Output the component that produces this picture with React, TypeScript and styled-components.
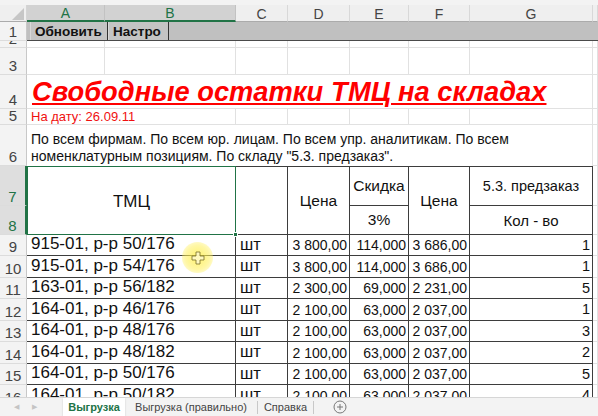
import React from "react";
import styled, { createGlobalStyle, css } from "styled-components";

const GlobalStyle = createGlobalStyle`
  html, body {
    margin: 0;
    padding: 0;
    overflow: hidden;
    background: #ffffff;
  }
  body {
    font-family: "Liberation Sans", Arial, sans-serif;
  }
  * {
    box-sizing: border-box;
  }
`;

const GREEN = "#217346";
const LINE = "#e1e1e1";
const DARK = "#3d3d3d";

// sheet row n lives on grid row n + 2 (row 1 = top strip, row 2 = letters)
const gr = (n: number) => n + 2;
// column letters: A = grid column 2 ... G = 8, the rest = 9
const COL: Record<string, number> = { A: 2, B: 3, C: 4, D: 5, E: 6, F: 7, G: 8, H: 9 };

const Frame = styled.div`
  width: 598px;
  height: 416px;
  display: flex;
  flex-direction: column;
  background: #fff;
`;

const Sheet = styled.div`
  position: relative;
  display: grid;
  grid-template-columns: 27px 78px 131px 52px 62px 59px 61px 123px 1fr;
  grid-template-rows: 5px 17px 19px 7px 27px 34px 16px 41px 40px 29px repeat(8, 21.45px);
  height: 397px;
  overflow: hidden;
  background: #fff;
`;

type Place = { $c: number; $r: number; $cs?: number; $rs?: number };

const place = css<Place>`
  grid-column: ${(p) => p.$c} / span ${(p) => p.$cs ?? 1};
  grid-row: ${(p) => p.$r} / span ${(p) => p.$rs ?? 1};
`;

const Strip = styled.div`
  grid-column: 1 / -1;
  grid-row: 1;
  background: #f3f3f3;
`;

const Corner = styled.div`
  grid-column: 1;
  grid-row: 2;
  background: #efefef;
  border-right: 1px solid #d4d4d4;
  border-bottom: 1px solid #ababab;
  display: flex;
  align-items: flex-end;
  justify-content: flex-end;
  padding: 0 2px 1px 0;
`;

const ColHead = styled.div<{ $c: number; $sel?: boolean }>`
  grid-column: ${(p) => p.$c};
  grid-row: 2;
  display: flex;
  align-items: center;
  justify-content: center;
  font-size: 14px;
  padding-top: 1px;
  color: ${(p) => (p.$sel ? GREEN : "#444")};
  background: ${(p) => (p.$sel ? "#d2d2d2" : "#efefef")};
  border-right: 1px solid ${(p) => (p.$sel ? "#c2c2c2" : "#d8d8d8")};
  border-bottom: ${(p) => (p.$sel ? `2px solid ${GREEN}` : "1px solid #ababab")};
`;

const RowHead = styled.div<{ $r: number; $sel?: boolean }>`
  grid-column: 1;
  grid-row: ${(p) => p.$r};
  display: flex;
  align-items: flex-end;
  justify-content: center;
  overflow: hidden;
  font-size: 15px;
  line-height: 14px;
  padding-bottom: 1px;
  color: ${(p) => (p.$sel ? GREEN : "#444")};
  background: ${(p) => (p.$sel ? "#dedede" : "#f3f3f3")};
  border-right: ${(p) => (p.$sel ? `2px solid ${GREEN}` : "1px solid #c8c8c8")};
  border-bottom: 1px solid #dcdcdc;
`;

const Blank = styled.div<Place>`
  ${place};
  border-right: 1px solid ${LINE};
  border-bottom: 1px solid ${LINE};
`;

const ButtonBar = styled.div`
  grid-column: 2 / -1;
  grid-row: ${gr(1)};
  display: flex;
  align-items: stretch;
  padding-left: 3px;
  background: #c0c0c0;
  border-bottom: 1px solid #4a4a4a;
`;

const SheetButton = styled.div<{ $w: number }>`
  width: ${(p) => p.$w}px;
  display: flex;
  align-items: center;
  padding-left: 4px;
  font-size: 13.5px;
  font-weight: bold;
  color: #111;
  background: #c4c4c4;
  border-right: 1.5px solid #333;
  border-left: 1px solid #d8d8d8;
`;

const Title = styled.div`
  grid-column: 2 / span 7;
  grid-row: ${gr(4)};
  display: flex;
  align-items: flex-end;
  padding: 0 0 1px 5px;
  background: #fff;
  border-right: 1px solid ${LINE};
  border-bottom: 1px solid ${LINE};
  color: #ff0000;
  font-size: 27.3px;
  line-height: 30px;
  font-weight: bold;
  font-style: italic;
  text-decoration: underline;
  text-decoration-thickness: 2px;
  text-underline-offset: 2px;
  white-space: nowrap;
`;

const DateCell = styled.div`
  grid-column: 2 / span 2;
  grid-row: ${gr(5)};
  display: flex;
  align-items: flex-end;
  padding: 0 0 0 4px;
  background: #fff;
  border-right: 1px solid ${LINE};
  border-bottom: 1px solid ${LINE};
  color: #f01010;
  font-size: 13px;
  line-height: 15px;
`;

const Note = styled.div`
  grid-column: 2 / span 7;
  grid-row: ${gr(6)};
  display: flex;
  align-items: flex-end;
  padding: 0 60px 1px 4px;
  background: #fff;
  border-right: 1px solid ${LINE};
  color: #111;
  font-size: 14px;
  line-height: 17px;
`;

const HeadCell = styled.div<Place & { $top?: boolean; $size?: number }>`
  ${place};
  display: flex;
  align-items: center;
  justify-content: center;
  text-align: center;
  background: #fff;
  color: #111;
  font-size: ${(p) => p.$size ?? 15.5}px;
  border-right: 1px solid ${DARK};
  border-bottom: 1px solid ${DARK};
  border-top: ${(p) => (p.$top ? `1px solid ${DARK}` : "none")};
`;

const Selected = styled.div`
  position: relative;
  grid-column: 2 / span 2;
  grid-row: ${gr(7)} / span 2;
  display: flex;
  align-items: center;
  justify-content: center;
  background: #fff;
  color: #111;
  font-size: 17px;
  padding-top: 2px;
  border: 1.5px solid ${GREEN};
  border-left-width: 1px;
`;

const Handle = styled.span`
  position: absolute;
  right: -3px;
  bottom: -3px;
  width: 5px;
  height: 5px;
  background: ${GREEN};
  border: 1px solid #fff;
`;

const Cell = styled.div<Place & { $align?: "left" | "right"; $size?: number }>`
  ${place};
  display: flex;
  align-items: flex-end;
  justify-content: ${(p) => (p.$align === "right" ? "flex-end" : "flex-start")};
  padding: 0 ${(p) => (p.$align === "right" ? 2 : 0)}px 1px ${(p) => (p.$align === "right" ? 0 : 4)}px;
  background: #fff;
  color: #111;
  white-space: nowrap;
  overflow: hidden;
  font-size: ${(p) => p.$size ?? 14}px;
  line-height: ${(p) => (p.$size ?? 14) + 3}px;
  border-right: 1px solid ${DARK};
  border-bottom: 1px solid ${DARK};
`;

const Pointer = styled.div`
  position: absolute;
  left: 182px;
  top: 242px;
  width: 31px;
  height: 31px;
  border-radius: 50%;
  background: radial-gradient(circle, rgba(255, 238, 60, 0.75) 0%, rgba(255, 240, 90, 0.55) 55%, rgba(255, 245, 140, 0) 100%);
  display: flex;
  align-items: center;
  justify-content: center;
  pointer-events: none;
`;

const TabBar = styled.div`
  flex: 1;
  display: flex;
  align-items: stretch;
  background: #f3f3f3;
  border-top: 1px solid #d6d6d6;
  font-family: "Liberation Sans", Arial, sans-serif;
  font-size: 11px;
  color: #444;
`;

const NavArrows = styled.div`
  width: 63px;
  display: flex;
  align-items: center;
  gap: 13px;
  padding-left: 14px;
  color: #c4c4c4;
  font-size: 7px;
`;

const Tab = styled.div<{ $active?: boolean; $w: number }>`
  width: ${(p) => p.$w}px;
  display: flex;
  align-items: center;
  justify-content: center;
  white-space: nowrap;
  background: ${(p) => (p.$active ? "#fff" : "transparent")};
  color: ${(p) => (p.$active ? GREEN : "#444")};
  font-weight: ${(p) => (p.$active ? "bold" : "normal")};
  box-shadow: ${(p) => (p.$active ? "0 1px 2px rgba(0,0,0,0.15)" : "none")};
`;

const TabSep = styled.div`
  width: 1px;
  margin: 3px 0 2px;
  background: #c8c8c8;
`;

const AddSheet = styled.div`
  width: 52px;
  display: flex;
  align-items: center;
  justify-content: center;
`;

type Item = { name: string; unit: string; price: string; disc: string; net: string; qty: string };

const rows: Item[] = [
  { name: "915-01, р-р 50/176", unit: "шт", price: "3 800,00", disc: "114,000", net: "3 686,00", qty: "1" },
  { name: "915-01, р-р 54/176", unit: "шт", price: "3 800,00", disc: "114,000", net: "3 686,00", qty: "1" },
  { name: "163-01, р-р 56/182", unit: "шт", price: "2 300,00", disc: "69,000", net: "2 231,00", qty: "5" },
  { name: "164-01, р-р 46/176", unit: "шт", price: "2 100,00", disc: "63,000", net: "2 037,00", qty: "1" },
  { name: "164-01, р-р 48/176", unit: "шт", price: "2 100,00", disc: "63,000", net: "2 037,00", qty: "3" },
  { name: "164-01, р-р 48/182", unit: "шт", price: "2 100,00", disc: "63,000", net: "2 037,00", qty: "2" },
  { name: "164-01, р-р 50/176", unit: "шт", price: "2 100,00", disc: "63,000", net: "2 037,00", qty: "5" },
  { name: "164-01, р-р 50/182", unit: "шт", price: "2 100,00", disc: "63,000", net: "2 037,00", qty: "4" },
];

const letters = ["A", "B", "C", "D", "E", "F", "G"];

const App = () => {
  const blanks: React.ReactNode[] = [];
  for (let r = 2; r <= 6; r++) {
    for (let c = 2; c <= 9; c++) blanks.push(<Blank key={`b${r}-${c}`} $c={c} $r={gr(r)} />);
  }
  for (let r = 7; r <= 16; r++) blanks.push(<Blank key={`h${r}`} $c={9} $r={gr(r)} />);

  return (
    <>
      <GlobalStyle />
      <Frame>
        <Sheet>
          <Strip />
          <Corner>
            <svg width="12" height="12" viewBox="0 0 12 12">
              <polygon points="12,0 12,12 0,12" fill="#c6c6c6" />
            </svg>
          </Corner>
          {letters.map((l, i) => (
            <ColHead key={l} $c={i + 2} $sel={i < 2}>
              {l}
            </ColHead>
          ))}
          <ColHead $c={9} />
          {Array.from({ length: 16 }, (_, i) => (
            <RowHead key={i} $r={gr(i + 1)} $sel={i === 6 || i === 7}>
              {i + 1}
            </RowHead>
          ))}

          {blanks}

          <ButtonBar>
            <SheetButton $w={78}>Обновить</SheetButton>
            <SheetButton $w={61}>Настро</SheetButton>
          </ButtonBar>

          <Title>Свободные остатки ТМЦ на складах</Title>
          <DateCell>На дату: 26.09.11</DateCell>
          <Note>
            По всем фирмам. По всем юр. лицам. По всем упр. аналитикам. По всем номенклатурным позициям. По складу
            "5.3. предзаказ".
          </Note>

          <Selected>
            ТМЦ
            <Handle />
          </Selected>
          <HeadCell $c={COL.C} $r={gr(7)} $rs={2} $top />
          <HeadCell $c={COL.D} $r={gr(7)} $rs={2} $top>
            Цена
          </HeadCell>
          <HeadCell $c={COL.E} $r={gr(7)} $top>
            Скидка
          </HeadCell>
          <HeadCell $c={COL.E} $r={gr(8)}>
            3%
          </HeadCell>
          <HeadCell $c={COL.F} $r={gr(7)} $rs={2} $top>
            Цена
          </HeadCell>
          <HeadCell $c={COL.G} $r={gr(7)} $top $size={14.5}>
            5.3. предзаказ
          </HeadCell>
          <HeadCell $c={COL.G} $r={gr(8)} $size={15}>
            Кол - во
          </HeadCell>

          {rows.map((row, i) => {
            const r = gr(9 + i);
            return (
              <React.Fragment key={i}>
                <Cell $c={COL.A} $r={r} $cs={2} $size={17}>
                  {row.name}
                </Cell>
                <Cell $c={COL.C} $r={r} $size={16.5}>
                  {row.unit}
                </Cell>
                <Cell $c={COL.D} $r={r} $align="right">
                  {row.price}
                </Cell>
                <Cell $c={COL.E} $r={r} $align="right">
                  {row.disc}
                </Cell>
                <Cell $c={COL.F} $r={r} $align="right">
                  {row.net}
                </Cell>
                <Cell $c={COL.G} $r={r} $align="right" $size={14.5}>
                  {row.qty}
                </Cell>
              </React.Fragment>
            );
          })}

          <Pointer>
            <svg width="14" height="14" viewBox="0 0 14 14">
              <path
                d="M5 1h4v4h4v4H9v4H5V9H1V5h4z"
                fill="rgba(255,250,200,0.9)"
                stroke="rgba(120,110,40,0.8)"
                strokeWidth="1"
              />
            </svg>
          </Pointer>
        </Sheet>

        <TabBar>
          <NavArrows>
            <span>◀</span>
            <span>▶</span>
          </NavArrows>
          <Tab $active $w={62}>
            Выгрузка
          </Tab>
          <Tab $w={132}>Выгрузка (правильно)</Tab>
          <TabSep />
          <Tab $w={55}>Справка</Tab>
          <TabSep />
          <AddSheet>
            <svg width="14" height="14" viewBox="0 0 14 14">
              <circle cx="7" cy="7" r="6" fill="none" stroke="#777" strokeWidth="1" />
              <path d="M7 4v6M4 7h6" stroke="#777" strokeWidth="1" />
            </svg>
          </AddSheet>
        </TabBar>
      </Frame>
    </>
  );
};

export default App;
